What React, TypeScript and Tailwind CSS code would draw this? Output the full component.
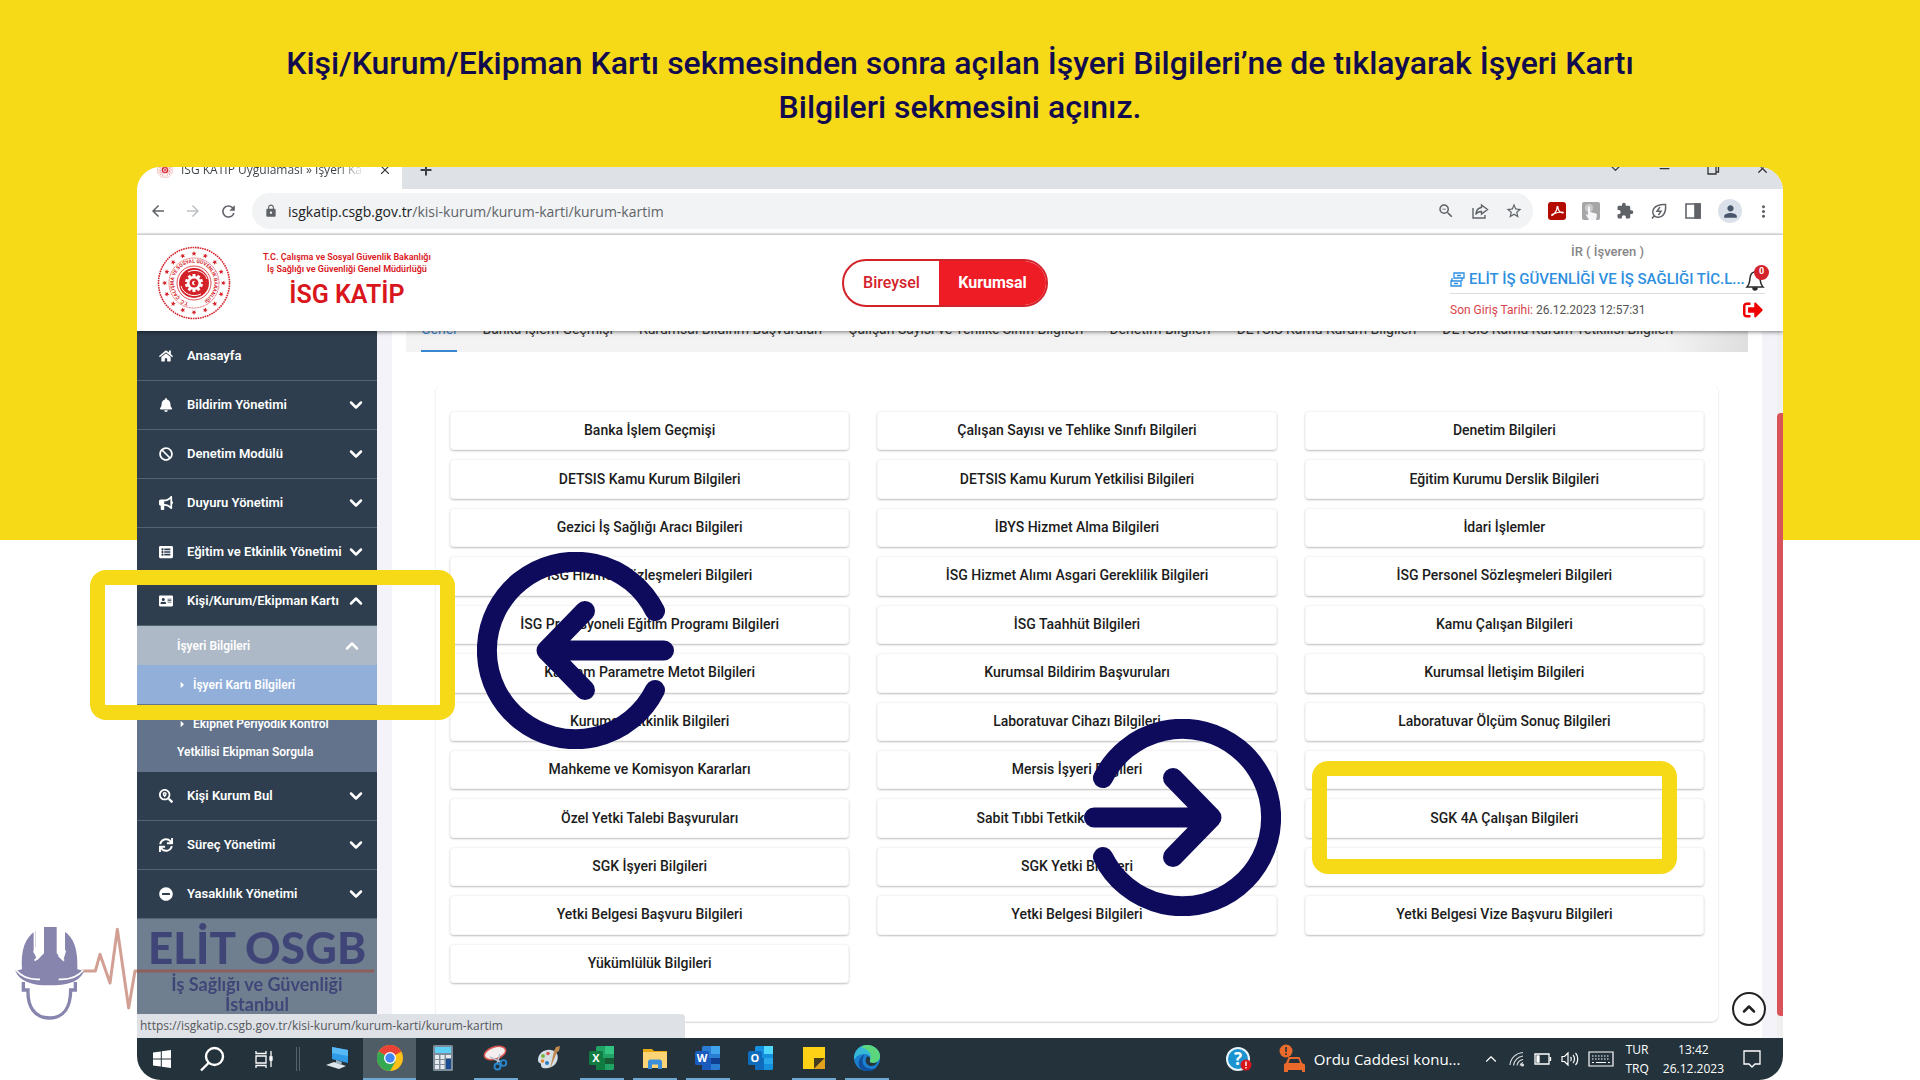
import type { ReactNode } from 'react'
import type { IconType } from 'react-icons'
import {
  FaAddressCard,
  FaBan,
  FaBell,
  FaHome,
  FaListAlt,
  FaMinusCircle,
  FaSearchLocation,
  FaSignOutAlt,
  FaSync,
} from 'react-icons/fa'
import { FaBullhorn } from 'react-icons/fa6'
import {
  MdArrowBack,
  MdArrowForward,
  MdArrowRight,
  MdExtension,
  MdLock,
  MdMoreVert,
  MdPerson,
  MdRefresh,
  MdStarBorder,
  MdZoomOut,
} from 'react-icons/md'
import { ChevronDown, ChevronUp, Minus, Plus, X } from 'lucide-react'

type MenuItem = { label: string; icon: IconType; chevron?: 'up' | 'down' }

const topMenu: MenuItem[] = [
  { label: 'Anasayfa', icon: FaHome },
  { label: 'Bildirim Yönetimi', icon: FaBell, chevron: 'down' },
  { label: 'Denetim Modülü', icon: FaBan, chevron: 'down' },
  { label: 'Duyuru Yönetimi', icon: FaBullhorn, chevron: 'down' },
  { label: 'Eğitim ve Etkinlik Yönetimi', icon: FaListAlt, chevron: 'down' },
  { label: 'Kişi/Kurum/Ekipman Kartı', icon: FaAddressCard, chevron: 'up' },
]

const bottomMenu: MenuItem[] = [
  { label: 'Kişi Kurum Bul', icon: FaSearchLocation, chevron: 'down' },
  { label: 'Süreç Yönetimi', icon: FaSync, chevron: 'down' },
  { label: 'Yasaklılık Yönetimi', icon: FaMinusCircle, chevron: 'down' },
]

const tabs = [
  'Genel',
  'Banka İşlem Geçmişi',
  'Kurumsal Bildirim Başvuruları',
  'Çalışan Sayısı ve Tehlike Sınıfı Bilgileri',
  'Denetim Bilgileri',
  'DETSIS Kamu Kurum Bilgileri',
  'DETSIS Kamu Kurum Yetkilisi Bilgileri',
]

const cards = [
  'Banka İşlem Geçmişi',
  'Çalışan Sayısı ve Tehlike Sınıfı Bilgileri',
  'Denetim Bilgileri',
  'DETSIS Kamu Kurum Bilgileri',
  'DETSIS Kamu Kurum Yetkilisi Bilgileri',
  'Eğitim Kurumu Derslik Bilgileri',
  'Gezici İş Sağlığı Aracı Bilgileri',
  'İBYS Hizmet Alma Bilgileri',
  'İdari İşlemler',
  'İSG Hizmet Sözleşmeleri Bilgileri',
  'İSG Hizmet Alımı Asgari Gereklilik Bilgileri',
  'İSG Personel Sözleşmeleri Bilgileri',
  'İSG Profesyoneli Eğitim Programı Bilgileri',
  'İSG Taahhüt Bilgileri',
  'Kamu Çalışan Bilgileri',
  'Kapsam Parametre Metot Bilgileri',
  'Kurumsal Bildirim Başvuruları',
  'Kurumsal İletişim Bilgileri',
  'Kurumsal Etkinlik Bilgileri',
  'Laboratuvar Cihazı Bilgileri',
  'Laboratuvar Ölçüm Sonuç Bilgileri',
  'Mahkeme ve Komisyon Kararları',
  'Mersis İşyeri Bilgileri',
  '',
  'Özel Yetki Talebi Başvuruları',
  'Sabit Tıbbi Tetkik Cihazı Bilgileri',
  'SGK 4A Çalışan Bilgileri',
  'SGK İşyeri Bilgileri',
  'SGK Yetki Bilgileri',
  '',
  'Yetki Belgesi Başvuru Bilgileri',
  'Yetki Belgesi Bilgileri',
  'Yetki Belgesi Vize Başvuru Bilgileri',
  'Yükümlülük Bilgileri',
]

const starAngles = Array.from({ length: 16 }, (_, i) => i * 22.5)
const toothAngles = Array.from({ length: 10 }, (_, i) => i * 36)

const Emblem = ({ className }: { className: string }) => (
  <svg viewBox="0 0 74 74" className={className} fill="none">
    <circle cx="37" cy="37" r="35.5" stroke="#d3222a" strokeWidth="1.6" strokeDasharray="1.6 0.8" />
    {starAngles.map((angle) => (
      <path
        key={angle}
        transform={`rotate(${angle} 37 37)`}
        d="M37 5l.7 1.7 1.8.1-1.4 1.2.5 1.8-1.6-1-1.6 1 .5-1.8-1.4-1.2 1.8-.1z"
        fill="#d3222a"
      />
    ))}
    <circle cx="37" cy="37" r="25" stroke="#d3222a" strokeWidth="0.8" strokeDasharray="1 0.6" />
    <path id="emblem-ring" d="M31.500 56.500A20.300 20.300 0 1 1 42.500 56.500" />
    <text fill="#d3222a" fontSize="5" fontWeight="700" fontFamily="Roboto, sans-serif">
      <textPath href="#emblem-ring">T.C. ÇALIŞMA VE SOSYAL GÜVENLİK BAKANLIĞI</textPath>
    </text>
    <circle cx="37" cy="37" r="17" stroke="#d3222a" strokeWidth="0.8" />
    <circle cx="37" cy="37" r="15" fill="#d3222a" />
    <path d="M24 40c2 8 12 12 20 8M50 33c-2-7-11-11-19-7" stroke="#fff" strokeWidth="1" />
    <circle cx="37" cy="37" r="7" fill="#fff" />
    {toothAngles.map((angle) => (
      <path key={angle} transform={`rotate(${angle} 37 37)`} d="M35.500 28h3v3h-3z" fill="#fff" />
    ))}
    <circle cx="37" cy="37" r="4.500" fill="#d3222a" />
    <path d="M38.500 35.200a2.200 2.200 0 1 0 0 3.600 1.800 1.800 0 1 1 0-3.600z" fill="#fff" />
  </svg>
)

const SidebarItem = ({ item }: { item: MenuItem }) => {
  const Icon = item.icon
  return (
    <a href="#" className="flex h-[49px] items-center border-b border-[#536371] pl-[22px] pr-[11px] text-[13px] text-white">
      <Icon className="size-[14px]" />
      <span className="ml-[14px] flex-1 whitespace-nowrap">{item.label}</span>
      {item.chevron === 'down' ? <ChevronDown className="size-5" strokeWidth={3} /> : null}
      {item.chevron === 'up' ? <ChevronUp className="size-5" strokeWidth={3} /> : null}
    </a>
  )
}

const Sidebar = () => (
  <aside className="flex w-60 shrink-0 flex-col bg-[#6f7f8f] text-[12px] font-semibold text-white">
    <nav className="bg-[#2e3e4e] pt-px">
      {topMenu.map((item) => (
        <SidebarItem key={item.label} item={item} />
      ))}
      <a href="#" className="flex h-[39px] items-center justify-between bg-[#adb9c6] pl-10 pr-[15px]">
        İşyeri Bilgileri
        <ChevronUp className="size-5" strokeWidth={3} />
      </a>
      <a href="#" className="flex h-[39px] items-center bg-[#91afd9] pl-[37px]">
        <MdArrowRight className="size-4" />
        <span className="ml-[3px]">İşyeri Kartı Bilgileri</span>
      </a>
      <a href="#" className="flex h-[68px] flex-col justify-center gap-3 bg-[#62738b] pl-[37px] leading-4">
        <span className="flex items-center">
          <MdArrowRight className="size-4" />
          <span className="ml-[3px]">Ekipnet Periyodik Kontrol</span>
        </span>
        <span className="pl-[3px]">Yetkilisi Ekipman Sorgula</span>
      </a>
      {bottomMenu.map((item) => (
        <SidebarItem key={item.label} item={item} />
      ))}
    </nav>
  </aside>
)

const BrowserBar = () => (
  <div className="font-['Open_Sans',sans-serif]">
    <div className="flex h-[22px] items-end justify-between overflow-hidden bg-[#dee1e6]">
      <div className="flex h-[38px] shrink-0 items-end">
        <div className="flex h-[38px] w-[265px] items-center bg-white pl-5 pr-[10px] text-[12px] text-[#3c4043]">
          <Emblem className="size-4" />
          <span className="ml-2 w-[184px] overflow-hidden whitespace-nowrap bg-linear-to-r from-[#3c4043] from-85% to-transparent bg-clip-text text-transparent">
            ISG KATİP Uygulaması » İşyeri Ka
          </span>
          <button className="ml-auto">
            <X className="size-[14px]" strokeWidth={2} />
          </button>
        </div>
        <div className="flex h-[38px] items-center rounded-bl-lg pl-4">
          <button>
            <Plus className="size-4 text-[#3c4043]" strokeWidth={3} />
          </button>
        </div>
      </div>
      <div className="flex h-[42px] shrink-0 items-center gap-[34px] pr-[13px] text-[#333]">
        <ChevronDown className="size-[15px]" strokeWidth={2} />
        <Minus className="size-[15px]" strokeWidth={2} />
        <svg viewBox="0 0 15 15" className="size-[15px]" fill="none" stroke="#333" strokeWidth="1.300">
          <path d="M2 4h8v9H2zM4 4V2h8.500v9H10" />
        </svg>
        <X className="size-[15px]" strokeWidth={2} />
      </div>
    </div>
    <div className="flex h-[46px] items-center border-b-2 border-[#ededed] bg-white text-[#5f6368]">
      <div className="flex items-center gap-[17px] pl-3">
        <MdArrowBack className="size-[18px]" />
        <MdArrowForward className="size-[18px] text-[#bdc1c6]" />
        <MdRefresh className="size-[19px]" />
      </div>
      <div className="ml-[14px] flex h-9 flex-1 items-center rounded-full bg-[#f1f3f4] pl-3 pr-[10px] text-[14px]">
        <MdLock className="size-[14px]" />
        <span className="ml-[10px]">
          <span className="text-[#202124]">isgkatip.csgb.gov.tr</span>/kisi-kurum/kurum-karti/kurum-kartim
        </span>
        <div className="ml-auto flex items-center gap-4">
          <MdZoomOut className="size-[18px]" />
          <svg viewBox="0 0 18 18" className="size-[18px]" fill="none" stroke="#5f6368" strokeWidth="1.400">
            <path d="M2 6v10h12v-3M10.500 3l6 4.500-6 4.500V9.500C7.500 9.300 6 10.500 4.800 12.500c.3-4 2.200-6.500 5.700-7z" />
          </svg>
          <MdStarBorder className="size-[18px]" />
        </div>
      </div>
      <div className="flex items-center gap-4 pl-[15px]">
        <svg viewBox="0 0 18 18" className="size-[18px]" fill="none">
          <rect width="18" height="18" rx="3" fill="#b30b00" />
          <path
            d="M4 13.500c2-.5 5-5 5-8 0-1.500 1-1.500 1 0 0 3 2.500 5.500 4.500 5.500 1.300 0 1-1-.5-1-3 0-6 .8-9 2-1.300.6-1.600 1.300-1 1.500z"
            stroke="#fff"
            strokeWidth="1.200"
          />
        </svg>
        <svg viewBox="0 0 18 18" className="size-[18px]" fill="none">
          <rect width="18" height="18" rx="2" fill="#a6a6a6" />
          <circle cx="7" cy="6" r="4" fill="#c9c9c9" />
          <path d="M6 5.500c0-1.300 2-1.300 2 0V10l6 1.500c1 .4 1 1.200.8 2.500l-.8 4H7l-3-5c0-1 1-1.200 2-.2z" fill="#f4f6fa" />
        </svg>
        <MdExtension className="size-[18px]" />
        <svg viewBox="0 0 18 18" className="size-[18px]" fill="none" stroke="#5f6368" strokeWidth="1.500">
          <path d="M2 16.500l2.200-2.700C1.500 10.500 2 2 15.500 2.500c1 9-3.500 14-9 12.500-1-.3-1.700-.7-2.300-1.200M10 5L7 9.300h4L8.500 13" />
        </svg>
        <svg viewBox="0 0 18 18" className="size-[18px]" fill="none" stroke="#5f6368" strokeWidth="1.600">
          <path d="M2 2h14v14H2z" />
          <path d="M11 2h5v14h-5z" fill="#5f6368" />
        </svg>
        <div className="flex size-6 items-center justify-center rounded-full bg-[#dbe1ea]">
          <MdPerson className="size-[19px] text-[#47566b]" />
        </div>
      </div>
      <MdMoreVert className="ml-3 mr-[10px] size-[19px]" />
    </div>
  </div>
)

const AppHeader = () => (
  <header className="relative z-10 flex h-24 shrink-0 items-center justify-between bg-white pl-5 pr-[18px] shadow-[0_1px_4px_rgba(0,0,0,0.5)]">
    <div className="flex flex-1 items-center">
      <Emblem className="size-[74px]" />
      <div className="ml-8 text-center text-[#d9161c]">
        <p className="text-[9px] font-semibold leading-3">T.C. Çalışma ve Sosyal Güvenlik Bakanlığı</p>
        <p className="text-[9px] font-semibold leading-3">İş Sağlığı ve Güvenliği Genel Müdürlüğü</p>
        <h2 className="mt-1 pb-1 text-[25px] font-semibold leading-8">İSG KATİP</h2>
      </div>
    </div>
    <div className="mr-8 flex h-12 overflow-hidden rounded-full border-2 border-[#d3222a] text-[16px]">
      <button className="w-[95px] font-medium text-[#d3222a]">Bireysel</button>
      <button className="w-[107px] bg-[#ee1c24] font-bold text-white">Kurumsal</button>
    </div>
    <div className="flex flex-1 justify-end">
      <div className="w-[315px]">
        <p className="text-center text-[13px] font-medium leading-[30px] text-[#868686]">İR ( İşveren )</p>
        <div className="flex h-[27px] items-center border-b border-[#dcdcdc]">
          <svg viewBox="0 0 15 15" className="size-[15px]" fill="none" stroke="#2e8fe0" strokeWidth="1.300">
            <path d="M4 1h10v5H4zM1 9h10v5H1zM2 6v3M12 6v3M7 3.500h4M4 11.500h4" />
          </svg>
          <span className="ml-1 whitespace-nowrap text-[15px] font-medium text-[#2e8fe0]">
            ELİT İŞ GÜVENLİĞİ VE İŞ SAĞLIĞI TİC.L...
          </span>
          <button className="relative ml-auto">
            <svg viewBox="0 0 20 22" className="h-[22px] w-5" fill="none" stroke="#2b2b2b" strokeWidth="1.500">
              <path d="M2 18c3-3 2.500-5 3-9C5.500 5 7.500 3 10 3s4.500 2 5 6c.5 4 0 6 3 9z" />
              <path d="M8 19a2 2 0 0 0 4 0z" fill="#2b2b2b" />
            </svg>
            <span className="absolute -right-1 -top-1 flex size-[15px] items-center justify-center rounded-full bg-[#d3222a] text-[9px] font-bold text-white">
              0
            </span>
          </button>
        </div>
        <div className="flex h-9 items-center justify-between pb-1 text-[12px]">
          <span className="text-[#555]">
            <span className="text-[#d9434b]">Son Giriş Tarihi:</span> 26.12.2023 12:57:31
          </span>
          <button className="pr-[2px]">
            <FaSignOutAlt className="size-5 text-[#f00000]" />
          </button>
        </div>
      </div>
    </div>
  </header>
)

const Content = () => (
  <main className="relative flex flex-1 flex-col border-x-[15px] border-[#f3f3f9] bg-white">
    <nav className="ml-[14px] mr-[14px] flex h-[21px] items-end gap-[26px] overflow-hidden bg-linear-to-r from-[#f3f3f3] from-94% to-[#dedede] pl-[15px] text-[14px] text-[#333]">
      {tabs.map((tab, i) => (
        <a
          key={tab}
          href="#"
          className={`flex h-11 shrink-0 items-center border-b-2 ${i === 0 ? 'border-[#3b86d1] text-[#3b86d1]' : 'border-transparent'}`}
        >
          {tab}
        </a>
      ))}
    </nav>
    <section className="mx-[43px] mb-4 mt-8 flex flex-1 flex-col rounded-lg border border-t-0 border-[#f3f3f3] px-[14px] pb-[38px] pt-[27px] shadow-[0_1px_1px_#dcdcdc]">
      <div className="grid flex-1 auto-rows-fr grid-cols-3 gap-x-[28px] gap-y-[9px]">
        {cards.map((card, i) => (
          <button
            key={i}
            className="rounded border border-[#f5f5f5] text-[14px] font-medium text-[#1c1c1c] shadow-[0_1px_2px_rgba(0,0,0,0.25)]"
          >
            {card}
          </button>
        ))}
      </div>
    </section>
    <button className="absolute -right-[4px] bottom-3 flex size-[34px] items-center justify-center rounded-full border-2 border-[#222] bg-white text-[#222]">
      <ChevronUp className="size-5" strokeWidth={3} />
    </button>
  </main>
)

const OfficeIcon = ({ letter, colors }: { letter: string; colors: [string, string, string, string] }) => (
  <svg viewBox="0 0 26 24" className="h-6 w-[26px]">
    <rect x="7" y="0" width="18" height="24" rx="1.500" fill={colors[0]} />
    <path d="M16 0h9v8h-9z" fill={colors[1]} />
    <path d="M7 12h9v12H7z" fill={colors[2]} />
    <path d="M16 12h9v6h-9z" fill={colors[3]} />
    <rect x="0" y="5" width="14" height="14" rx="1.500" fill={colors[2]} />
    <text x="7" y="16" textAnchor="middle" fontSize="11" fontWeight="700" fontFamily="Open Sans, sans-serif" fill="#fff">
      {letter}
    </text>
  </svg>
)

const taskApps: Array<{ name: string; open?: boolean; active?: boolean; icon: ReactNode }> = [
  {
    name: 'pc',
    icon: (
      <svg viewBox="0 0 26 26" className="size-[26px]">
        <path d="M8 2l16 3v13L8 14z" fill="#2f9be6" />
        <path d="M8 2l16 3v6L8 8z" fill="#57b9f5" />
        <path d="M2 20l8-3 12 4-7 3z" fill="#dfe7ec" />
        <path d="M12 15l6 2-1 3-5-2z" fill="#9fb3c0" />
      </svg>
    ),
  },
  {
    name: 'chrome',
    open: true,
    active: true,
    icon: (
      <svg viewBox="0 0 26 26" className="size-[26px]">
        <circle cx="13" cy="13" r="13" fill="#fbc116" />
        <path d="M13 13L1.700 6.500A13 13 0 0 1 24.300 6.500z" fill="#ea4335" />
        <path d="M13 13L1.700 6.500A13 13 0 0 0 13 26l5.600-9.800z" fill="#34a853" />
        <path d="M13 7h11.500a13 13 0 0 0-.2-.5H13z" fill="#ea4335" />
        <circle cx="13" cy="13" r="6" fill="#fff" />
        <circle cx="13" cy="13" r="4.700" fill="#4285f4" />
      </svg>
    ),
  },
  {
    name: 'calculator',
    icon: (
      <svg viewBox="0 0 20 26" className="h-[26px] w-5">
        <rect width="20" height="26" rx="1.500" fill="#7c8c98" />
        <path d="M2 2h16v6H2z" fill="#5fd0f5" />
        <path d="M2 10h4v4H2zM7.500 10h4v4h-4zM13 10h5v3h-5zM2 15h4v4H2zM7.500 15h4v4h-4zM2 20h4v4H2zM7.500 20h4v4h-4z" fill="#e5ebef" />
        <path d="M13 14h5v10h-5z" fill="#1b4b90" />
      </svg>
    ),
  },
  {
    name: 'snip',
    open: true,
    icon: (
      <svg viewBox="0 0 26 26" className="size-[26px]" fill="none">
        <ellipse cx="12" cy="8" rx="11" ry="6" transform="rotate(-18 12 8)" fill="#f4eeee" stroke="#d9534f" strokeWidth="1.500" />
        <path d="M7 12l11 5M17 9l-3 10" stroke="#b9c4cc" strokeWidth="1.500" />
        <circle cx="20.500" cy="18" r="2.800" stroke="#2b88d0" strokeWidth="1.800" />
        <circle cx="14.500" cy="21.500" r="3" stroke="#2b88d0" strokeWidth="1.800" />
      </svg>
    ),
  },
  {
    name: 'paint',
    icon: (
      <svg viewBox="0 0 26 26" className="size-[26px]">
        <path d="M2 15C2 8 9 4 15 5c6 1 8 6 6 11-2 6-9 8-14 7-3-1-1-4-3-5-1 0-2-1-2-3z" fill="#d5dfe6" />
        <circle cx="7" cy="11" r="2" fill="#7db343" />
        <circle cx="12" cy="8.500" r="1.800" fill="#d9534f" />
        <circle cx="6.500" cy="16" r="1.800" fill="#e0892e" />
        <circle cx="11" cy="18" r="2" fill="#2f7cc4" />
        <path d="M20 2l4-1-1 5-2 1-7 17 4-18z" fill="#c2894e" />
      </svg>
    ),
  },
  { name: 'excel', open: true, icon: <OfficeIcon letter="X" colors={['#21a366', '#33c481', '#107c41', '#185c37']} /> },
  {
    name: 'explorer',
    open: true,
    icon: (
      <svg viewBox="0 0 26 22" className="h-[22px] w-[26px]">
        <path d="M1 2h9l2 2h13v17H1z" fill="#e8a914" />
        <path d="M1 5h24v16H1z" fill="#fdd475" />
        <path d="M6 22v-7c0-1.500 1-2.500 2.500-2.500h9c1.500 0 2.500 1 2.500 2.500v7h-4v-4.500h-6V22z" fill="#3a8fd8" />
      </svg>
    ),
  },
  { name: 'word', open: true, icon: <OfficeIcon letter="W" colors={['#2b7cd3', '#41a5ee', '#185abd', '#103f91']} /> },
  { name: 'outlook', icon: <OfficeIcon letter="O" colors={['#1490df', '#50d9ff', '#0f6cbd', '#28a8ea']} /> },
  {
    name: 'notes',
    open: true,
    icon: (
      <svg viewBox="0 0 24 24" className="size-6">
        <path d="M1 1h22v22H1z" fill="#fcd116" />
        <path d="M12 12h11L12 23z" fill="#443c1f" />
        <path d="M23 12v11H12z" fill="#e2a11c" />
      </svg>
    ),
  },
  {
    name: 'edge',
    open: true,
    icon: (
      <svg viewBox="0 0 26 26" className="size-[26px]">
        <circle cx="13" cy="13" r="13" fill="#1b7fd0" />
        <path d="M0 12C1 4 7 0 13 0c8 0 13 6 13 11 0 4-3 7-7 7-3 0-4-1-3-3 1-3-1-6-5-6-5 0-9 2-11 6z" fill="#36b9d6" />
        <path d="M13 0c8 0 13 6 13 11 0 4-3 7-7 7-3 0-4-1-3-3 2-4 1-10-9-13 2-1.300 4-2 6-2z" fill="#5bd67c" />
        <path d="M9 13c-2 6 2 11 9 11 2 0 4-1 5-2-3 4-8 4.500-12 3.800C3 24 2 14 11 9c-1 1-1.700 2.500-2 4z" fill="#0f4f9c" />
        <path d="M16 15c-1 2 0 3 3 3 2 0 3.500-.5 4.500-1.500-1.500 4-4.500 4.500-7 4.500-3.500-.5-5.500-4-4.500-7.500s5-2 4 1.500z" fill="#26343b" />
      </svg>
    ),
  },
]

const Taskbar = () => (
  <footer className="flex h-[42px] shrink-0 items-center bg-[#24333b] pr-[22px] font-['Open_Sans',sans-serif] text-white">
    <button className="flex w-[50px] justify-center">
      <svg viewBox="0 0 18 18" className="size-[18px]" fill="#fff">
        <path d="M0 2.500l7.800-1.100v7.200H0zM8.800 1.300L18 0v8.600H8.800zM0 9.500h7.800v7.100L0 15.500zM8.800 9.500H18V18l-9.200-1.300z" />
      </svg>
    </button>
    <button className="flex w-[50px] justify-center">
      <svg viewBox="0 0 26 26" className="size-[26px]" fill="none" stroke="#fff" strokeWidth="2.400">
        <circle cx="15.500" cy="10.500" r="8.500" />
        <path d="M9.500 17L2 24.500" />
      </svg>
    </button>
    <button className="flex w-[53px] justify-center">
      <svg viewBox="0 0 20 20" className="size-5" fill="none" stroke="#fff" strokeWidth="1.300">
        <path d="M2 2v2.500h10V2M2 7h10v7H2zM2 19v-2.500h10V19M17 2v16" />
        <path d="M16 8h2v3h-2z" fill="#fff" />
      </svg>
    </button>
    <div className="mx-[6px] h-6 w-1 border-x border-[#55636b]" />
    <div className="flex h-full pl-1">
      {taskApps.map((app) => (
        <button
          key={app.name}
          className={`flex h-full w-[53px] flex-col items-center ${app.active ? 'bg-[#4f5d67]' : ''}`}
        >
          <span className="flex flex-1 items-center">{app.icon}</span>
          <span className={`h-[2px] ${app.active ? 'w-full' : 'w-11'} ${app.open ? 'bg-[#6fa8d0]' : ''}`} />
        </button>
      ))}
    </div>
    <svg viewBox="0 0 26 26" className="ml-auto size-[26px]">
      <circle cx="12" cy="13" r="11" fill="#1b93d1" stroke="#e9f4fa" strokeWidth="2" />
      <text x="12" y="19" textAnchor="middle" fontSize="17" fontWeight="700" fontFamily="Open Sans, sans-serif" fill="#fff">
        ?
      </text>
      <circle cx="20" cy="19" r="5.500" fill="#d9161c" />
      <path d="M19.300 15.500h1.400v4.500h-1.400zM19.300 21h1.400v1.500h-1.400z" fill="#fff" />
    </svg>
    <svg viewBox="0 0 27 30" className="ml-[27px] h-[30px] w-[27px]">
      <circle cx="7" cy="7" r="6.500" fill="#ea6a2c" />
      <path d="M6.200 3h1.600v5H6.200zM6.200 9.200h1.600v1.700H6.200z" fill="#24333b" />
      <path d="M5 28v-8l2-1 2.500-6h11l2.500 6 3 1.500V28h-3v-2H9v2z" fill="#ea6a2c" />
      <path d="M11 15h8.500l1.500 4H9.500z" fill="#24333b" />
    </svg>
    <span className="ml-2 text-[15px]">Ordu Caddesi konu...</span>
    <div className="ml-[22px] flex items-center gap-[9px]">
      <ChevronUp className="size-[18px]" strokeWidth={1.500} />
      <svg viewBox="0 0 16 16" className="size-4" fill="none" stroke="#d5dadd" strokeWidth="1.200">
        <path d="M1 14C1.500 7 7 2 14 1.500M4.500 14.500C5 9.500 9 5.500 14 5M8 14.500c.5-3 3-5.500 6-6M11 14.500c.5-1.500 1.500-2.500 3-3" />
        <circle cx="13.500" cy="14" r="1" fill="#fff" />
      </svg>
      <svg viewBox="0 0 18 12" className="h-3 w-[18px]" fill="none" stroke="#fff" strokeWidth="1.300">
        <path d="M1 1h14v10H1zM16.500 4v4" />
        <path d="M3 3h2v6H3z" fill="#fff" />
      </svg>
      <svg viewBox="0 0 18 16" className="h-4 w-[18px]" fill="none" stroke="#fff" strokeWidth="1.200">
        <path d="M1 5.500h2.500L7 2v12l-3.500-3.500H1zM9.500 6c1 1 1 3 0 4M12 4c2 2 2 6 0 8M14.500 2c3 3 3 9 0 12" />
      </svg>
      <svg viewBox="0 0 26 16" className="h-4 w-[26px]" fill="none" stroke="#fff" strokeWidth="1.200">
        <path d="M1 1h24v14H1z" />
        <path d="M4 5h18M4 8h18" strokeDasharray="1.500 1.500" />
        <path d="M4 11.500h2M8 11.500h10M20 11.500h2" />
      </svg>
    </div>
    <div className="ml-[11px] text-center text-[12px] leading-[19px]">
      <p>TUR</p>
      <p>TRQ</p>
    </div>
    <div className="ml-[14px] text-center text-[12px] leading-[19px]">
      <p>13:42</p>
      <p>26.12.2023</p>
    </div>
    <svg viewBox="0 0 18 18" className="ml-[19px] size-[18px]" fill="none" stroke="#fff" strokeWidth="1.300">
      <path d="M1 1h16v13h-5l-3 3-3-3H1z" />
    </svg>
  </footer>
)

const CircleArrow = ({ className }: { className: string }) => (
  <svg
    viewBox="0 0 197 197"
    className={className}
    fill="none"
    stroke="#0f0b5c"
    strokeWidth="20"
    strokeLinecap="round"
    strokeLinejoin="round"
  >
    <path d="M178 59A88.700 88.700 0 1 0 178 138" />
    <path d="M187 98.500H71M108 59L69.500 98.500 108 138" />
  </svg>
)

const Watermark = () => (
  <div className="absolute left-0 top-[920px] opacity-50">
    <svg viewBox="0 0 1140 300" className="h-[100px] w-[380px]" fill="none">
      <path d="M246 153h40l14-50 30 86 22-161 34 236 19-111h718" stroke="#a5412a" strokeWidth="9" strokeLinejoin="round" />
      <path
        d="M66 148C62 92 74 52 108 32v48l-8 14 12 26 20-20V21h38v79l20 20 8-26-8-14V32c34 20 44 60 42 116l20 4c-12 34-50 44-104 44S58 184 46 152z"
        fill="#110d60"
      />
      <path d="M104 28v72M118 30v78l-14 14M192 28v72M178 30v78l14 14" stroke="#fff" strokeWidth="6" />
      <path d="M48 150c18 22 40 30 72 28M250 150c-18 22-42 30-74 28" stroke="#fff" strokeWidth="5" />
      <path d="M70 186v24h14c-2 50 20 84 64 84s64-34 64-84h14v-24" stroke="#110d60" strokeWidth="10" />
    </svg>
    <div className="absolute left-[137px] top-0 w-[240px] text-center font-['Lato',sans-serif] font-bold text-[#110d60]">
      <p className="text-[44px] font-black leading-[54px]">ELİT OSGB</p>
      <p className="text-[18px] leading-5">İş Sağlığı ve Güvenliği</p>
      <p className="text-[18px] leading-5">İstanbul</p>
    </div>
  </div>
)

export const App = () => (
  <div className="relative flex h-screen flex-col overflow-hidden bg-[linear-gradient(#f6da18_50%,#ffffff_50%)] px-[137px] pt-[41px] font-['Roboto',sans-serif]">
    <h1 className="text-center text-[32px] font-medium leading-[44px] text-[#120c4f]">
      Kişi/Kurum/Ekipman Kartı sekmesinden sonra açılan İşyeri Bilgileri’ne de tıklayarak İşyeri Kartı
      <br />
      Bilgileri sekmesini açınız.
    </h1>
    <div className="mt-[38px] flex min-h-0 flex-1 flex-col overflow-hidden rounded-3xl bg-white">
      <BrowserBar />
      <AppHeader />
      <div className="relative flex min-h-0 flex-1">
        <Sidebar />
        <Content />
        <div className="w-[6px] bg-[#f0f0f0] pb-[22px] pt-[82px]">
          <div className="h-full rounded-l bg-[#d9535b]" />
        </div>
        <div className="absolute bottom-0 left-0 flex h-6 w-[548px] items-center rounded-tr bg-[#dee1e6] pl-[3px] font-['Open_Sans',sans-serif] text-[12px] text-[#55585c]">
          https://isgkatip.csgb.gov.tr/kisi-kurum/kurum-karti/kurum-kartim
        </div>
      </div>
      <Taskbar />
    </div>

    <div className="absolute left-[90px] top-[570px] h-[150px] w-[365px] rounded-2xl border-[15px] border-[#f6da18]" />
    <div className="absolute left-[1312px] top-[761px] h-[113px] w-[365px] rounded-2xl border-[15px] border-[#f6da18]" />
    <CircleArrow className="absolute left-[477px] top-[552px] size-[197px]" />
    <CircleArrow className="absolute left-[1084px] top-[719px] size-[197px] rotate-180" />
    <Watermark />
  </div>
)

export default App
